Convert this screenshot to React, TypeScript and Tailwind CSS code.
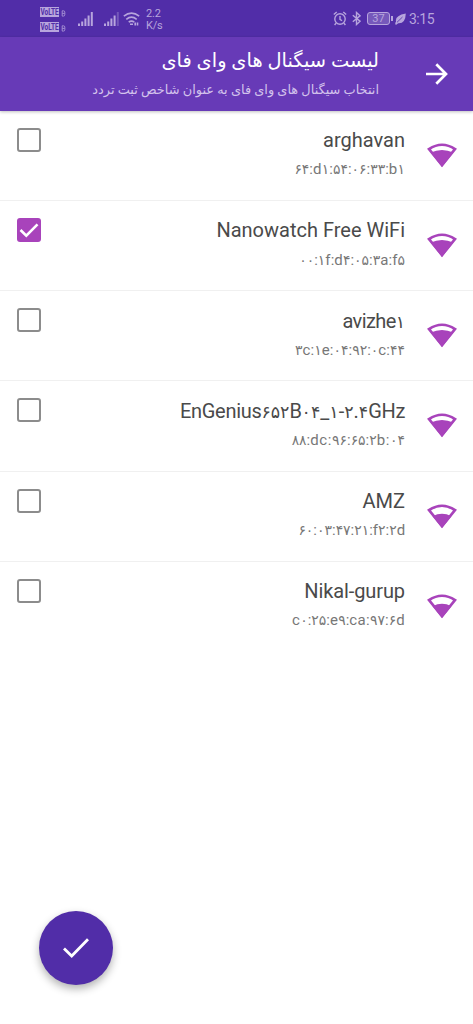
import { Fragment, useState } from 'react'

interface Network {
  ssid: string
  bssid: string
  level: 2 | 3
  ssidClass: string
  bssidClass: string
}

const networks: Network[] = [
  { ssid: 'arghavan', bssid: '۶۴:d۱:۵۴:۰۶:۳۳:b۱', level: 3, ssidClass: '', bssidClass: 'tracking-[0.3px]' },
  { ssid: 'Nanowatch Free WiFi', bssid: '۰۰:۱f:d۴:۰۵:۳a:f۵', level: 3, ssidClass: '', bssidClass: 'tracking-[0.1px]' },
  { ssid: 'avizhe۱', bssid: '۳c:۱e:۰۴:۹۲:۰c:۴۴', level: 3, ssidClass: 'tracking-[-0.6px]', bssidClass: 'tracking-[0.1px]' },
  { ssid: 'EnGenius۶۵۲B۰۴_۱-۲.۴GHz', bssid: '۸۸:dc:۹۶:۶۵:۲b:۰۴', level: 3, ssidClass: 'tracking-[-0.32px]', bssidClass: 'tracking-[0.6px]' },
  { ssid: 'AMZ', bssid: '۶۰:۰۳:۴۷:۲۱:f۲:۲d', level: 2, ssidClass: '', bssidClass: 'tracking-[-0.1px]' },
  { ssid: 'Nikal-gurup', bssid: 'c۰:۲۵:e۹:ca:۹۷:۶d', level: 2, ssidClass: 'tracking-[-0.1px]', bssidClass: 'tracking-[0.35px]' },
]

// Persian digits come from another face than the Latin letters and are sized on their own
function MixedText({ text, digitClass }: { text: string; digitClass: string }) {
  return (
    <>
      {text.split(/([۰-۹]+)/).map((part, i) =>
        /[۰-۹]/.test(part) ? (
          <span key={i} className={`font-['DejaVu_Sans',sans-serif] ${digitClass}`}>
            {part}
          </span>
        ) : (
          <Fragment key={i}>{part}</Fragment>
        ),
      )}
    </>
  )
}

function SignalIcon({ level }: { level: 2 | 3 }) {
  return (
    <svg width="30" height="25" viewBox="0 0 30 25" className="shrink-0 text-[#a843bb]">
      <path d="M2 6.1Q15-2.6 28 6.1L15 22Z" fill="none" stroke="currentColor" strokeWidth="2.7" />
      <path
        d={level === 3 ? 'M3.6 9.4Q15 4.4 26.4 9.4L15 24Z' : 'M5.6 12.2Q15 7.4 24.4 12.2L15 24Z'}
        fill="currentColor"
      />
    </svg>
  )
}

function Checkbox({ checked, onChange }: { checked: boolean; onChange: () => void }) {
  return (
    <button
      type="button"
      role="checkbox"
      aria-checked={checked}
      onClick={onChange}
      className={`mt-[17px] flex h-6 w-6 shrink-0 items-center justify-center rounded-[3px] ${
        checked ? 'bg-[#a843bb]' : 'border-[2.5px] border-[#8c8c8c]'
      }`}
    >
      {checked ? (
        <svg width="24" height="24" viewBox="0 0 24 24" fill="none" stroke="#fff" strokeWidth="2.6">
          <path d="M3.5 12L9.3 17.6L20.5 6.4" />
        </svg>
      ) : null}
    </button>
  )
}

function CellBars({ faded = false }: { faded?: boolean }) {
  return (
    <svg width="15" height="14" viewBox="0 0 15 14" fill="currentColor">
      <path d="M0 11.5h2V14H0zM3.2 9.5h2V14h-2zM6.4 6.5h2V14h-2zM9.6 3.5h2V14h-2z" />
      <path d="M12.8 0h2v14h-2z" opacity={faded ? 0.35 : 1} />
    </svg>
  )
}

function VolteBadge() {
  return (
    <div className="flex items-end gap-0.5">
      <span className="flex h-2.5 w-[19px] items-center justify-center bg-[#b7a5dd] text-[#512da8]">
        <span className="scale-y-[1.4] text-[6.5px] leading-none font-bold">VoLTE</span>
      </span>
      <svg width="5" height="7" viewBox="0 0 5 7" fill="none" stroke="currentColor" opacity="0.8">
        <path d="M1.2 0.8h1.2q1.4 0 1.4 1.3v2.7q0 1.3-1.4 1.3H1.2zM1.2 3.4h2.4" />
      </svg>
    </div>
  )
}

function StatusBar() {
  return (
    <div className="flex h-[37px] shrink-0 items-center bg-[#512da8] pl-10 pr-[39px] text-[#b7a5dd]">
      <div className="mt-0.5 flex w-[26px] flex-col gap-[5px]">
        <VolteBadge />
        <VolteBadge />
      </div>
      <div className="ml-3">
        <CellBars />
      </div>
      <div className="ml-[11px]">
        <CellBars faded />
      </div>
      <svg width="17" height="14" viewBox="0 0 17 14" fill="none" stroke="currentColor" strokeWidth="1.6" className="ml-1">
        <path d="M0.8 4.2Q8.5-2 16.2 4.2M3.3 7.3Q8.5 3 13.7 7.3M5.7 10.2Q8.5 8 11.3 10.2" />
        <path d="M7 12.2h3M12.2 10.5v3M14.5 10.5v3" />
      </svg>
      <div className="ml-1.5 mt-0.5 text-[11px] leading-[12px] tracking-[-0.2px]">
        <div>2.2</div>
        <div>K/s</div>
      </div>
      <svg width="14" height="15" viewBox="0 0 14 15" fill="none" stroke="currentColor" strokeWidth="1.4" className="ml-auto">
        <circle cx="7" cy="8" r="5.2" />
        <path d="M7 5v3.3l2 1.5M0.8 3.5L3.7 1M13.2 3.5L10.3 1M3 12.2L1.6 14M11 12.2l1.4 1.8" />
      </svg>
      <svg width="9" height="15" viewBox="0 0 9 15" fill="none" stroke="currentColor" strokeWidth="1.4" className="ml-[5px]">
        <path d="M0.8 4.2L8 10.2L4.5 13.5V1.5L8 4.8L0.8 10.8" />
      </svg>
      <div className="ml-1.5 flex h-[13px] w-[23px] items-center justify-center rounded-[3px] border border-current bg-[#7658bb] text-[11px] leading-none">
        37
      </div>
      <div className="ml-px h-[5px] w-0.5 bg-current" />
      <svg width="11" height="12" viewBox="0 0 11 12" className="ml-0.5">
        <path d="M0.3 11.5Q0 9.5 1 8.7Q-0.3 2.5 10.8 0.5Q10.5 10.8 3.2 10.3L1.3 11.7Z" fill="currentColor" />
        <path d="M2 9.3L7.5 4" stroke="#512da8" strokeWidth="0.8" />
      </svg>
      <span className="ml-[3px] mt-px text-[14px] leading-none tracking-[-0.5px]">3:15</span>
    </div>
  )
}

export default function App() {
  const [selected, setSelected] = useState<string[]>(['Nanowatch Free WiFi'])

  const toggle = (ssid: string) => {
    setSelected((prev) => (prev.includes(ssid) ? prev.filter((s) => s !== ssid) : [...prev, ssid]))
  }

  return (
    <div className="flex h-[1024px] w-full flex-col overflow-hidden bg-white font-[Roboto,'DejaVu_Sans',sans-serif]">
      <StatusBar />
      <header
        dir="rtl"
        className="flex h-[73.5px] shrink-0 items-start bg-[#673ab7] pr-[25.5px] text-white shadow-[0_1px_3px_rgba(0,0,0,0.25)]"
      >
        <button type="button" aria-label="بازگشت" className="mt-[26px] shrink-0">
          <svg width="23" height="22" viewBox="0 0 23 22" fill="none" stroke="currentColor" strokeWidth="2.7">
            <path d="M1 11h20M11.3 1.3L21 11L11.3 20.7" />
          </svg>
        </button>
        <div className="mr-[45.5px] whitespace-nowrap">
          <h1 className="mt-[9px] text-[19.4px] leading-[30px]">لیست سیگنال های وای فای</h1>
          <p className="mt-1 text-[12.9px] leading-5 text-[#d3c3ec]">انتخاب سیگنال های وای فای به عنوان شاخص ثبت تردد</p>
        </div>
      </header>

      <ul className="mt-[0.3px]">
        {networks.map((network) => (
          <li
            key={network.bssid}
            className="flex h-[90.2px] items-start border-b border-[#f0f0f0] pl-[17px] pr-[16.5px] last:border-b-0"
          >
            <Checkbox checked={selected.includes(network.ssid)} onChange={() => toggle(network.ssid)} />
            <div className="mr-[21.5px] flex flex-1 flex-col items-end whitespace-nowrap">
              <span className={`mt-[15.4px] h-[28px] text-[20px] leading-[28px] text-[#4a4a4a] ${network.ssidClass}`}>
                <MixedText text={network.ssid} digitClass="text-[0.87em]" />
              </span>
              <span className={`mt-[5.2px] h-5 text-[15px] leading-5 text-[#777777] ${network.bssidClass}`}>
                <MixedText text={network.bssid} digitClass="text-[0.93em]" />
              </span>
            </div>
            <div className="mt-8">
              <SignalIcon level={network.level} />
            </div>
          </li>
        ))}
      </ul>

      <button
        type="button"
        aria-label="تایید"
        className="mt-auto mb-[39px] ml-[39px] flex h-[74px] w-[74px] shrink-0 items-center justify-center rounded-full bg-[#512da8] text-white shadow-[0_4px_8px_rgba(0,0,0,0.3)]"
      >
        <svg width="28" height="22" viewBox="0 0 28 22" fill="none" stroke="currentColor" strokeWidth="2.8">
          <path d="M2 11.5L9.7 19L26 2.2" />
        </svg>
      </button>
    </div>
  )
}
